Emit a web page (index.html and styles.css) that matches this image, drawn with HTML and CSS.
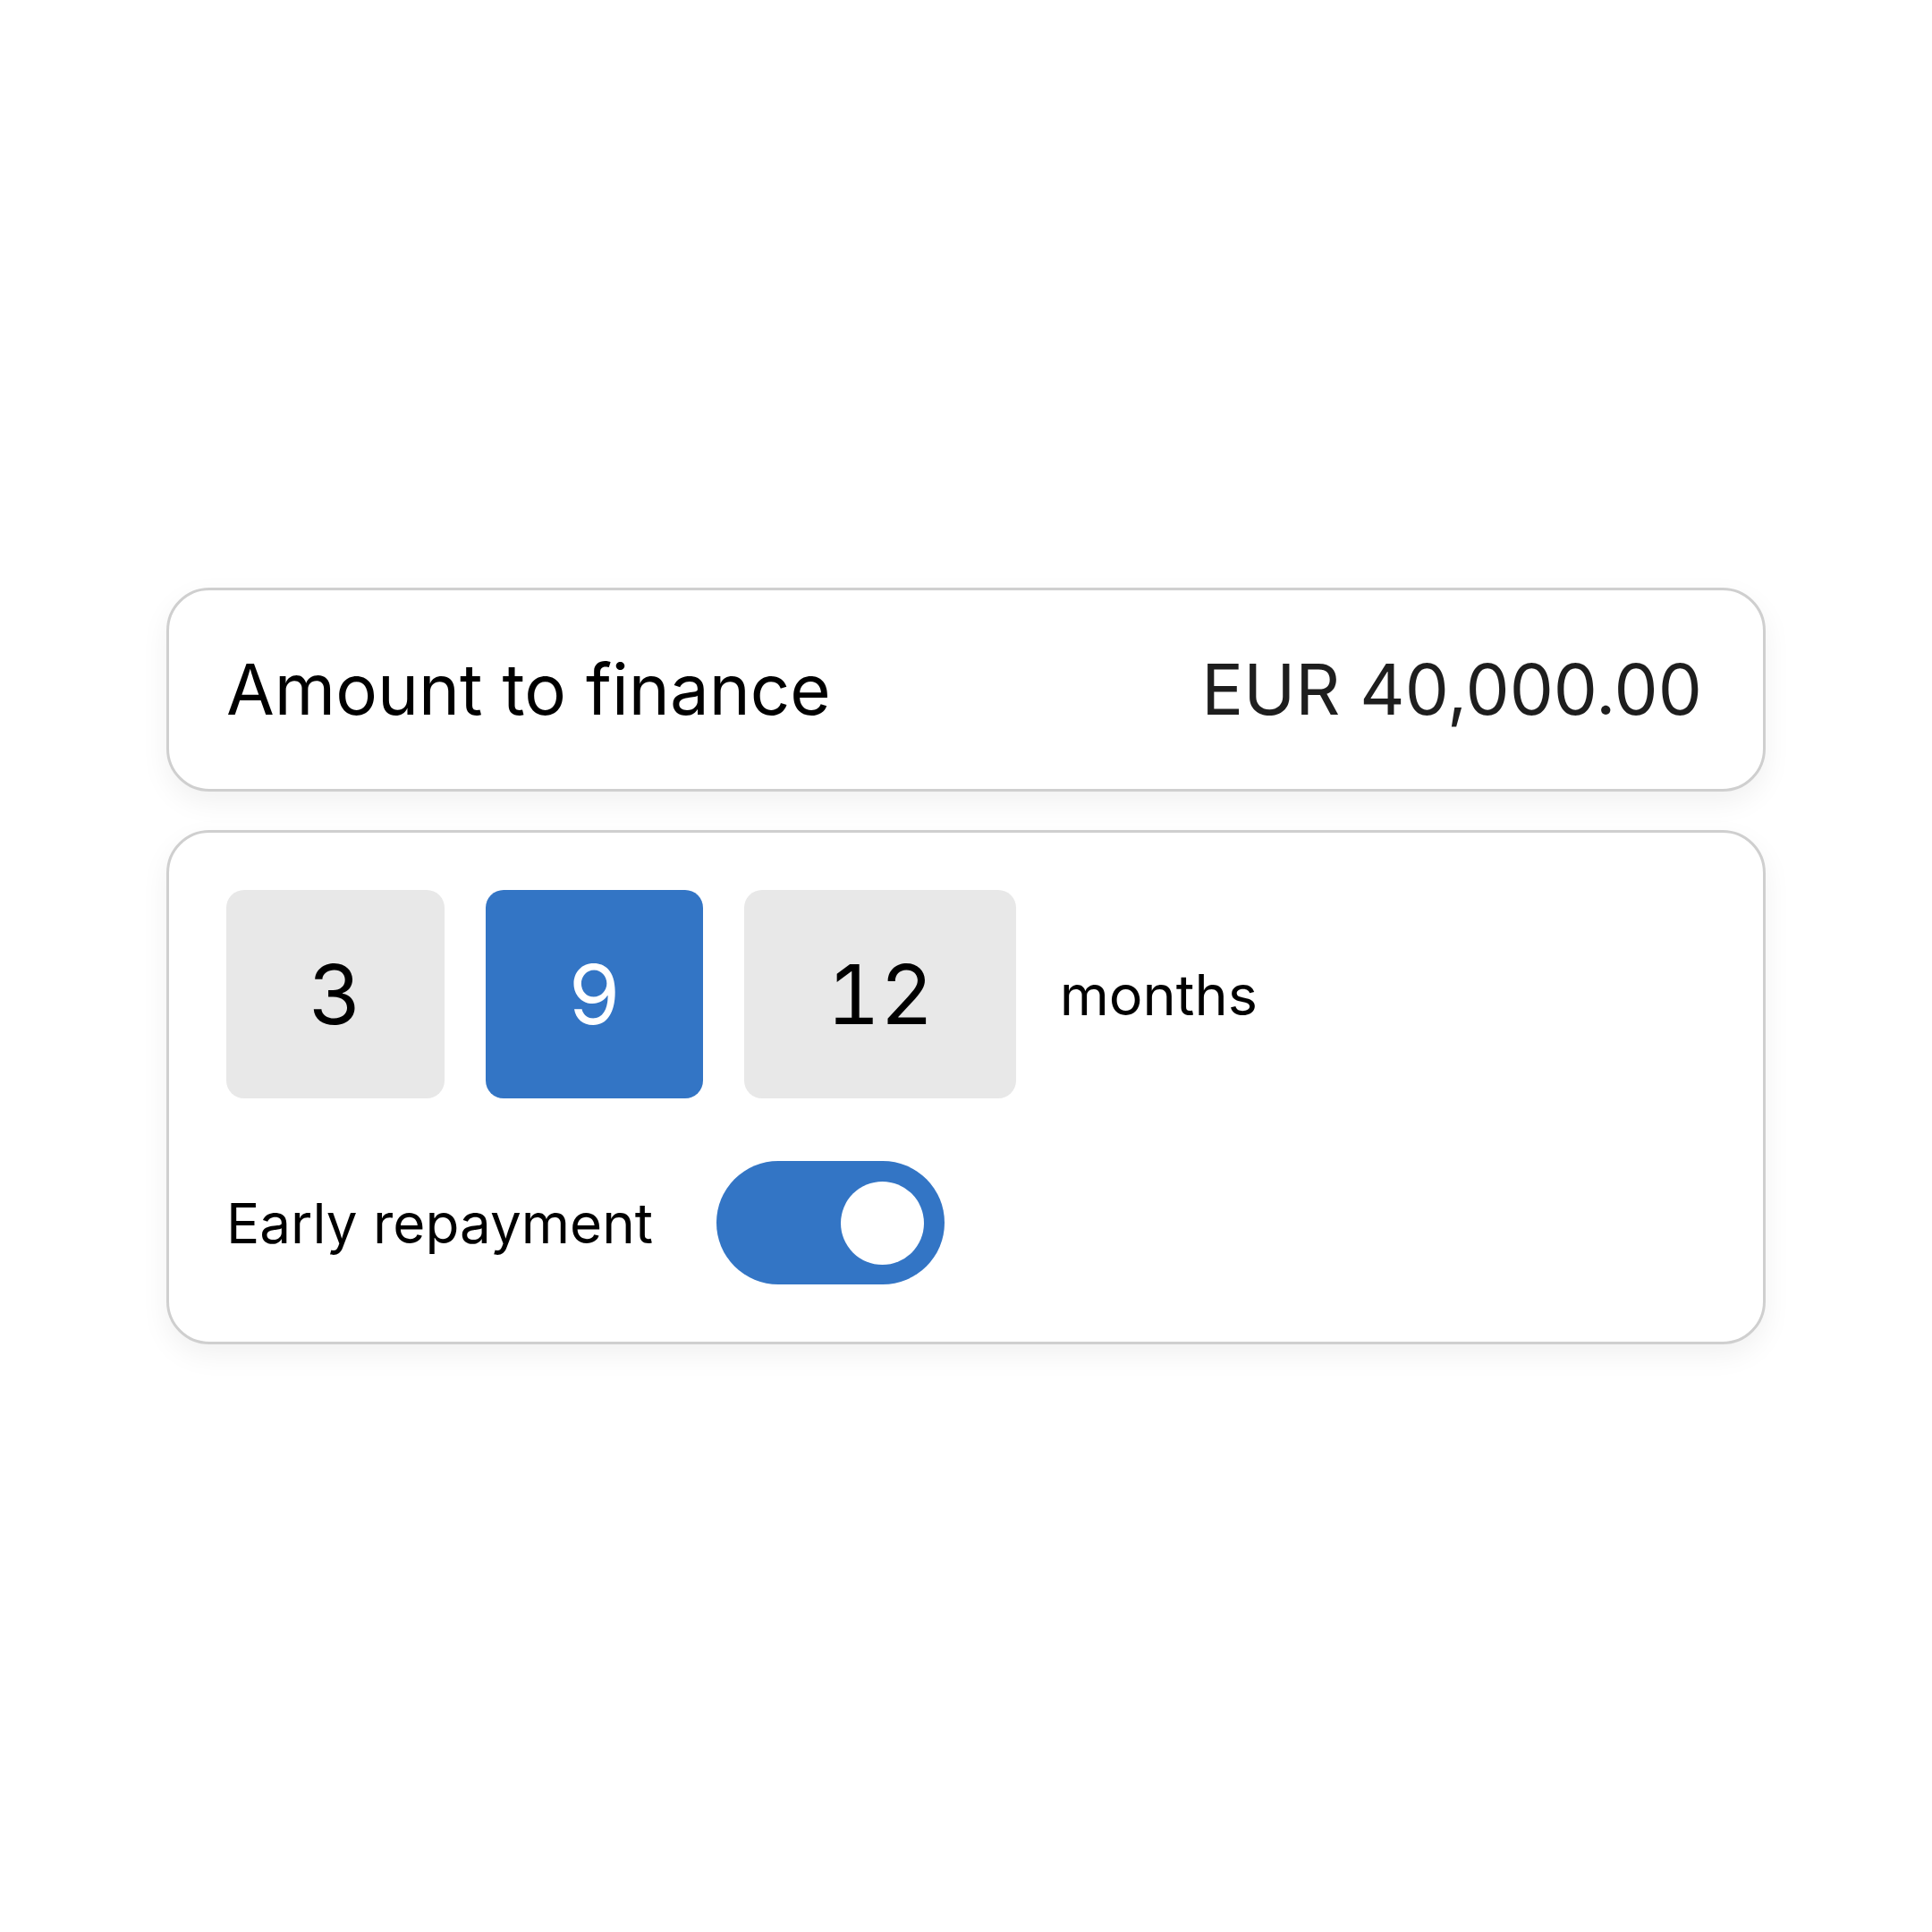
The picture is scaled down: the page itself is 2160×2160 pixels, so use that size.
FILE: index.html
```html
<!DOCTYPE html>
<html lang="en">
<head>
    <meta charset="UTF-8">
    <meta name="viewport" content="width=device-width, initial-scale=1.0">
    <title>Financing</title>
    <link rel="stylesheet" href="styles.css">
</head>
<body>
    <div class="wrapper">
        <div class="card amount-card">
            <span class="amount-label">Amount to finance</span>
            <span class="amount-value">EUR 40,000.00</span>
        </div>
        <div class="card term-card">
            <div class="term-row">
                <button class="term">3</button>
                <button class="term active">9</button>
                <button class="term">12</button>
                <span class="term-unit">months</span>
            </div>
            <div class="repay-row">
                <span class="repay-label">Early repayment</span>
                <div class="switch on"><div class="knob"></div></div>
            </div>
        </div>
    </div>
</body>
</html>
```

FILE: styles.css
```css
body {
    font-family: Inter, "Liberation Sans", sans-serif;
    margin: 0;
    padding: 0;
    background-color: #ffffff;
    color: #000;
}
.wrapper {
    min-height: 100vh;
    display: flex;
    flex-direction: column;
    justify-content: center;
    align-items: center;
    gap: 43px;
}
.card {
    width: 1788px;
    box-sizing: border-box;
    border: 3px solid #cfcfcf;
    border-radius: 48px;
    background-color: #fff;
    padding: 64px;
    box-shadow: 0 12px 32px rgba(0, 0, 0, 0.06);
}
.amount-card {
    display: flex;
    justify-content: space-between;
    align-items: center;
    font-size: 78px;
    line-height: 94px;
    padding-right: 68px;
}
.amount-value {
    color: #1e1e1e;
}
.term-card {
    display: flex;
    flex-direction: column;
    gap: 70px;
}
.term-row {
    display: flex;
    align-items: center;
    gap: 46px;
}
.term {
    height: 233px;
    padding: 0 92px;
    border: none;
    border-radius: 20px;
    background-color: #e8e8e8;
    color: #000;
    font-family: inherit;
    font-size: 92px;
    font-variant-numeric: tabular-nums;
    line-height: 1;
}
.term.active {
    background-color: #3375c5;
    color: #fff;
}
.term-unit {
    font-size: 63px;
    margin-left: 3px;
}
.repay-row {
    display: flex;
    align-items: center;
    gap: 71px;
}
.repay-label {
    font-size: 62px;
}
.switch {
    width: 255px;
    height: 138px;
    box-sizing: border-box;
    border-radius: 69px;
    background-color: #3375c5;
    padding: 23px;
    display: flex;
    justify-content: flex-end;
    align-items: center;
}
.knob {
    width: 93px;
    height: 93px;
    border-radius: 50%;
    background-color: #fff;
}
```
